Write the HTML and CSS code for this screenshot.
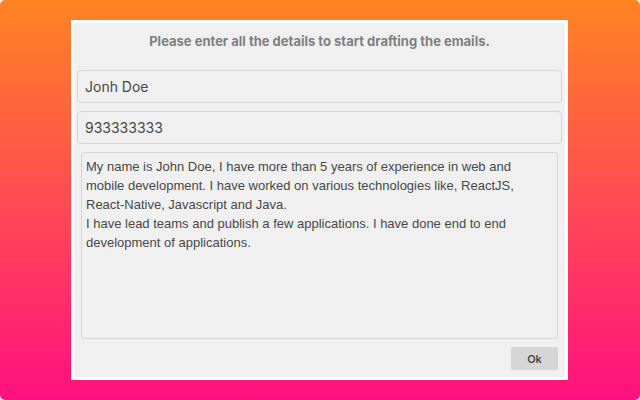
FILE: index.html
```html
<!DOCTYPE html>
<html lang="en">
<head>
<meta charset="utf-8">
<meta name="viewport" content="width=device-width, initial-scale=1">
<title>Draft emails</title>
<link rel="stylesheet" href="styles.css">
</head>
<body>
<main class="backdrop">
<form class="panel">
<h1 class="title">Please enter all the details to start drafting the emails.</h1>
<input class="field" type="text" aria-label="Name" value="Jonh Doe">
<input class="field" type="tel" aria-label="Phone number" value="933333333">
<textarea class="about" aria-label="About you" spellcheck="false">My name is John Doe, I have more than 5 years of experience in web and mobile development. I have worked on various technologies like, ReactJS, React-Native, Javascript and Java.
I have lead teams and publish a few applications. I have done end to end development of applications.</textarea>
<button class="ok" type="button">Ok</button>
</form>
</main>
</body>
</html>
```
FILE: styles.css
```css
* {
  box-sizing: border-box;
}

body {
  margin: 0;
  background: #fff;
  font-family: Inter, "Liberation Sans", sans-serif;
  color: #484848;
}

.backdrop {
  display: flex;
  min-height: 100vh;
  padding: 20px 72px 20px 71px;
  border-radius: 5px;
  background: linear-gradient(#ff8423, #ff1180);
}

.panel {
  flex: 1;
  display: flex;
  flex-direction: column;
  gap: 8px;
  padding: 10px 3px 7px;
  border: 3px solid #fff;
  background: #f0f0f0;
}

.title {
  margin: 0 0 13px;
  font-size: 13px;
  line-height: 16px;
  font-weight: 700;
  text-align: center;
  color: #808080;
}

.field {
  width: 100%;
  height: 33px;
  padding: 0 7px;
  border: 1px solid #d6d6d6;
  border-radius: 4px;
  background: #f0f0f0;
  font: 14px/20px Inter, "Liberation Sans", sans-serif;
  color: #484848;
}

.about {
  flex: 1;
  margin: 0 4px;
  padding: 4px 32px 4px 4px;
  border: 1px solid #d6d6d6;
  border-radius: 3px;
  background: #f0f0f0;
  font: 13px/19px "Liberation Sans", sans-serif;
  color: #484848;
  resize: none;
}

.ok {
  align-self: flex-end;
  width: 47px;
  height: 23px;
  margin-right: 4px;
  padding: 0;
  border: 0;
  border-radius: 2px;
  background: #d6d6d6;
  font: 600 11px/14px Inter, "Liberation Sans", sans-serif;
  color: #484848;
}
```
